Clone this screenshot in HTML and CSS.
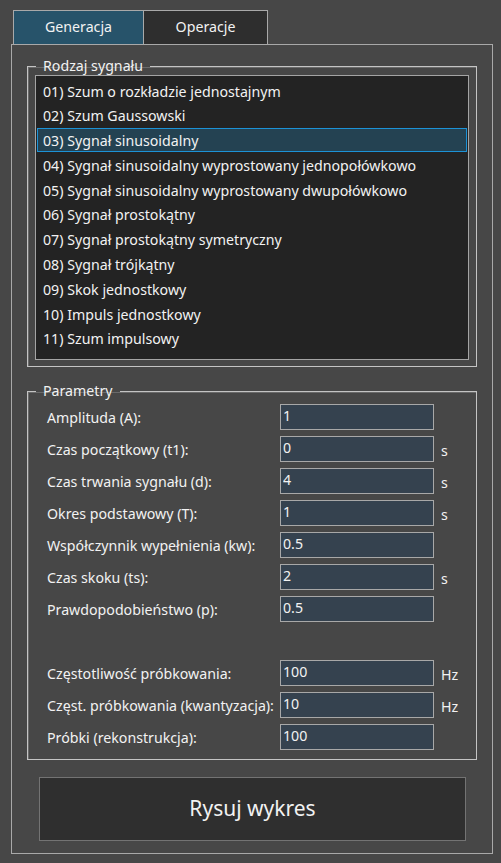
FILE: index.html
```html
<!DOCTYPE html>
<html lang="pl">
<head>
<meta charset="utf-8">
<title>Generacja sygnałów</title>
<link rel="stylesheet" href="styles.css">
</head>
<body>
<div class="window">
  <div class="tabs">
    <div class="tab active">Generacja</div>
    <div class="tab">Operacje</div>
  </div>
  <div class="panel">
    <fieldset class="group signals">
      <legend>Rodzaj sygnału</legend>
      <ul class="list">
        <li class="item">01) Szum o rozkładzie jednostajnym</li>
        <li class="item">02) Szum Gaussowski</li>
        <li class="item selected">03) Sygnał sinusoidalny</li>
        <li class="item">04) Sygnał sinusoidalny wyprostowany jednopołówkowo</li>
        <li class="item">05) Sygnał sinusoidalny wyprostowany dwupołówkowo</li>
        <li class="item">06) Sygnał prostokątny</li>
        <li class="item">07) Sygnał prostokątny symetryczny</li>
        <li class="item">08) Sygnał trójkątny</li>
        <li class="item">09) Skok jednostkowy</li>
        <li class="item">10) Impuls jednostkowy</li>
        <li class="item">11) Szum impulsowy</li>
      </ul>
    </fieldset>
    <fieldset class="group params">
      <legend>Parametry</legend>
      <div class="rows">
        <div class="row"><span class="label">Amplituda (A):</span><input class="field" type="text" value="1"><span class="unit"></span></div>
        <div class="row"><span class="label">Czas początkowy (t1):</span><input class="field" type="text" value="0"><span class="unit">s</span></div>
        <div class="row"><span class="label">Czas trwania sygnału (d):</span><input class="field" type="text" value="4"><span class="unit">s</span></div>
        <div class="row"><span class="label">Okres podstawowy (T):</span><input class="field" type="text" value="1"><span class="unit">s</span></div>
        <div class="row"><span class="label">Współczynnik wypełnienia (kw):</span><input class="field" type="text" value="0.5"><span class="unit"></span></div>
        <div class="row"><span class="label">Czas skoku (ts):</span><input class="field" type="text" value="2"><span class="unit">s</span></div>
        <div class="row"><span class="label">Prawdopodobieństwo (p):</span><input class="field" type="text" value="0.5"><span class="unit"></span></div>
        <div class="row section-start"><span class="label">Częstotliwość próbkowania:</span><input class="field" type="text" value="100"><span class="unit">Hz</span></div>
        <div class="row"><span class="label">Częst. próbkowania (kwantyzacja):</span><input class="field" type="text" value="10"><span class="unit">Hz</span></div>
        <div class="row"><span class="label">Próbki (rekonstrukcja):</span><input class="field" type="text" value="100"><span class="unit"></span></div>
      </div>
    </fieldset>
    <button class="draw" type="button">Rysuj wykres</button>
  </div>
</div>
</body>
</html>
```
FILE: styles.css
```css
* {
  box-sizing: border-box;
}

html, body {
  margin: 0;
  padding: 0;
  background: #474747;
}

body {
  font-family: "Noto Sans", "DejaVu Sans", sans-serif;
  font-size: 14.2px;
  color: #f2f2f2;
  width: 501px;
  height: 863px;
  overflow: hidden;
}

.window {
  padding: 10px 8px 0 11px;
}

.tabs {
  display: flex;
  padding-left: 2px;
  height: 34px;
}

.tab {
  height: 34px;
  border: 1px solid #a9a9a9;
  border-bottom: none;
  background: #2e2e2e;
  display: flex;
  align-items: center;
  justify-content: center;
  padding-bottom: 1px;
  line-height: 18px;
}

.tab.active {
  width: 131px;
  background: #27536a;
}

.tab + .tab {
  width: 125px;
  margin-left: -1px;
}

.panel {
  width: 482px;
  height: 810px;
  border: 1px solid #a9a9a9;
  padding: 0 15px;
}

.group {
  margin: 0;
  border: 1px solid #c4c4c4;
  box-shadow: inset 1px 1px 0 #6a6a6a;
  padding: 0 7px 6px;
  min-width: 0;
}

.group legend {
  padding: 0 7px;
  margin-left: 1px;
  line-height: 18px;
  height: 18px;
}

.signals {
  margin-top: 12px;
}

.list {
  list-style: none;
  margin: 0;
  height: 285px;
  background: #232323;
  border: 1px solid #a4a4a4;
  padding: 2px 1px 0;
}

.item {
  height: 24.8px;
  line-height: 22px;
  padding: 1.5px 0 0 5px;
  border: 1px solid transparent;
  white-space: nowrap;
}

.item.selected {
  background: #244252;
  border-color: #1c92d6;
}

.params {
  margin-top: 15px;
  padding-bottom: 9px;
}

.rows {
  display: flex;
  flex-direction: column;
  gap: 6px;
  padding: 4px 0 0 12px;
}

.row {
  display: flex;
  align-items: center;
  height: 26px;
}

.row.section-start {
  margin-top: 32px;
}

.label {
  width: 233px;
  flex: none;
  white-space: nowrap;
  padding-top: 1px;
}

.field {
  width: 154px;
  height: 26px;
  flex: none;
  margin: 0;
  border: 1px solid #a8a8a8;
  background: #35424f;
  color: #f2f2f2;
  font: inherit;
  padding: 0 2px 3px;
  outline: none;
}

.unit {
  margin-left: 7px;
  padding-top: 3px;
}

.draw {
  display: block;
  margin: 17px 0 0 12px;
  width: 427px;
  height: 64px;
  background: #2f2f2f;
  border: 1px solid #737373;
  color: #f2f2f2;
  font-family: inherit;
  font-size: 21px;
  padding: 0 0 2px;
}
```
